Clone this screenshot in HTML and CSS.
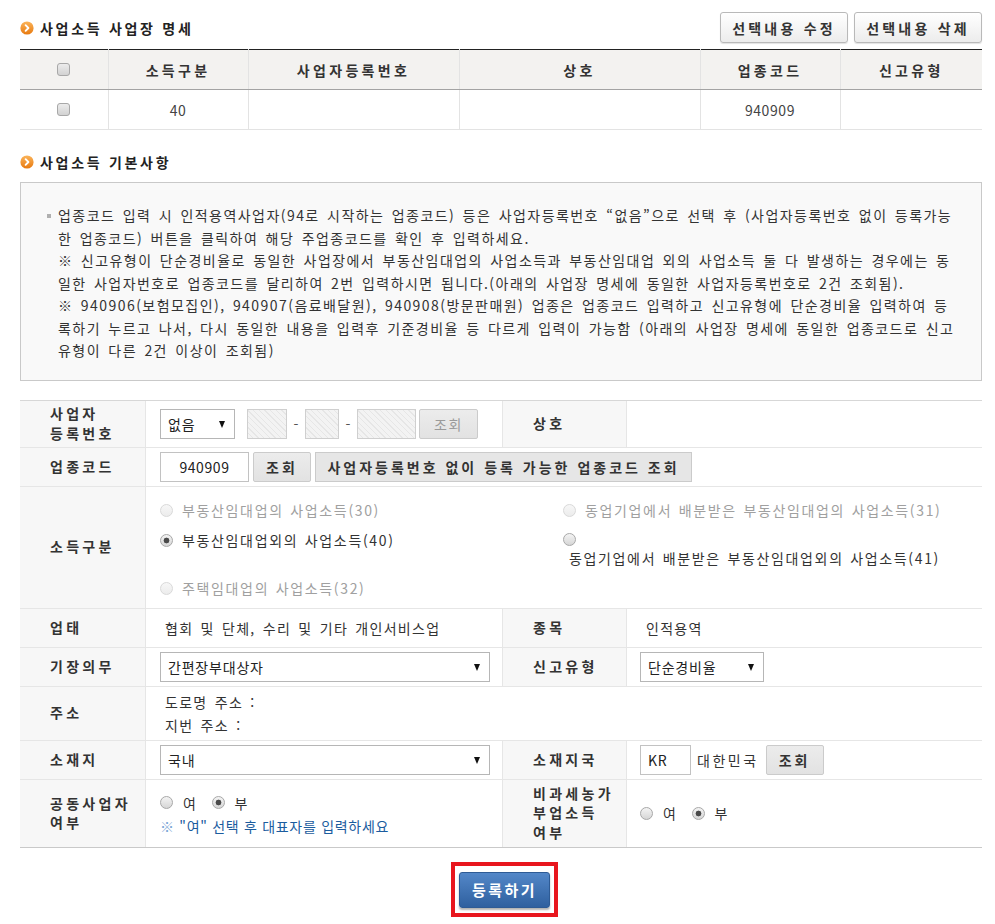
FILE: index.html
```html
<!DOCTYPE html>
<html lang="ko">
<head>
<meta charset="utf-8">
<title>사업소득 사업장 명세</title>
<link rel="stylesheet" href="styles.css">
</head>
<body>
<div class="page">
  <div class="sec-head">
    <h2 class="sec-title">
      <svg class="ico" width="14" height="14" viewBox="0 0 14 14"><defs><linearGradient id="og" x1="0" y1="0" x2="0" y2="1"><stop offset="0" stop-color="#fbb45a"/><stop offset="1" stop-color="#e7790f"/></linearGradient></defs><circle cx="7" cy="7" r="6.6" fill="url(#og)"/><path d="M5.6 4.2 L8.4 7 L5.6 9.8" fill="none" stroke="#fff" stroke-width="1.9" stroke-linecap="round" stroke-linejoin="round"/></svg>
      사업소득 사업장 명세
    </h2>
    <div class="head-btns">
      <button class="btn-w" type="button">선택내용 수정</button>
      <button class="btn-w" type="button">선택내용 삭제</button>
    </div>
  </div>

  <table class="list">
    <colgroup>
      <col class="c1"><col class="c2"><col class="c3"><col class="c4"><col class="c5"><col class="c6">
    </colgroup>
    <thead>
      <tr>
        <th><input type="checkbox" class="chk"></th>
        <th>소득구분</th>
        <th>사업자등록번호</th>
        <th>상호</th>
        <th>업종코드</th>
        <th>신고유형</th>
      </tr>
    </thead>
    <tbody>
      <tr>
        <td><input type="checkbox" class="chk"></td>
        <td>40</td>
        <td></td>
        <td></td>
        <td>940909</td>
        <td></td>
      </tr>
    </tbody>
  </table>

  <h2 class="sec-title sec-title2">
    <svg class="ico" width="14" height="14" viewBox="0 0 14 14"><defs><linearGradient id="og2" x1="0" y1="0" x2="0" y2="1"><stop offset="0" stop-color="#fbb45a"/><stop offset="1" stop-color="#e7790f"/></linearGradient></defs><circle cx="7" cy="7" r="6.6" fill="url(#og2)"/><path d="M5.6 4.2 L8.4 7 L5.6 9.8" fill="none" stroke="#fff" stroke-width="1.9" stroke-linecap="round" stroke-linejoin="round"/></svg>
    사업소득 기본사항
  </h2>

  <div class="info">
    <p class="info-txt">
      <span class="ln first">업종코드 입력 시 인적용역사업자(94로 시작하는 업종코드) 등은 사업자등록번호 “없음”으로 선택 후 (사업자등록번호 없이 등록가능</span>
      <span class="ln">한 업종코드) 버튼을 클릭하여 해당 주업종코드를 확인 후 입력하세요.</span>
      <span class="ln">※ 신고유형이 단순경비율로 동일한 사업장에서 부동산임대업의 사업소득과 부동산임대업 외의 사업소득 둘 다 발생하는 경우에는 동</span>
      <span class="ln">일한 사업자번호로 업종코드를 달리하여 2번 입력하시면 됩니다.(아래의 사업장 명세에 동일한 사업자등록번호로 2건 조회됨).</span>
      <span class="ln">※ 940906(보험모집인), 940907(음료배달원), 940908(방문판매원) 업종은 업종코드 입력하고 신고유형에 단순경비율 입력하여 등</span>
      <span class="ln">록하기 누르고 나서, 다시 동일한 내용을 입력후 기준경비율 등 다르게 입력이 가능함 (아래의 사업장 명세에 동일한 업종코드로 신고</span>
      <span class="ln">유형이 다른 2건 이상이 조회됨)</span>
    </p>
  </div>

  <div class="form">
    <!-- row 1 -->
    <div class="cell lbl">사업자<br>등록번호</div>
    <div class="cell val">
      <span class="sel w75"><select><option>없음</option></select></span>
      <input class="inp hatch w40" type="text" disabled>
      <span class="dash">-</span>
      <input class="inp hatch w34" type="text" disabled>
      <span class="dash">-</span>
      <input class="inp hatch w59" type="text" disabled>
      <button class="btn-g w59 off" type="button" disabled>조회</button>
    </div>
    <div class="cell lbl lbl2">상호</div>
    <div class="cell val val2"></div>

    <!-- row 2 -->
    <div class="cell lbl">업종코드</div>
    <div class="cell val span3">
      <input class="inp w89 center" type="text" value="940909">
      <button class="btn-g w58" type="button">조회</button>
      <button class="btn-g btn-long" type="button">사업자등록번호 없이 등록 가능한 업종코드 조회</button>
    </div>

    <!-- row 3 -->
    <div class="cell lbl">소득구분</div>
    <div class="cell val span3">
      <div class="rgrid">
        <label class="ritem dis"><input type="radio" class="rd" name="inc" disabled><span>부동산임대업의 사업소득(30)</span></label>
        <label class="ritem dis"><input type="radio" class="rd" name="inc" disabled><span>동업기업에서 배분받은 부동산임대업의 사업소득(31)</span></label>
        <label class="ritem"><input type="radio" class="rd" name="inc" checked><span>부동산임대업외의 사업소득(40)</span></label>
        <label class="ritem stack"><input type="radio" class="rd" name="inc"><span>동업기업에서 배분받은 부동산임대업외의 사업소득(41)</span></label>
        <label class="ritem dis"><input type="radio" class="rd" name="inc" disabled><span>주택임대업의 사업소득(32)</span></label>
      </div>
    </div>

    <!-- row 4 -->
    <div class="cell lbl">업태</div>
    <div class="cell val"><span class="txt">협회 및 단체, 수리 및 기타 개인서비스업</span></div>
    <div class="cell lbl lbl2">종목</div>
    <div class="cell val val2"><span class="txt">인적용역</span></div>

    <!-- row 5 -->
    <div class="cell lbl">기장의무</div>
    <div class="cell val"><span class="sel w330"><select><option>간편장부대상자</option></select></span></div>
    <div class="cell lbl lbl2">신고유형</div>
    <div class="cell val val2"><span class="sel w124"><select><option>단순경비율</option></select></span></div>

    <!-- row 6 -->
    <div class="cell lbl">주소</div>
    <div class="cell val span3">
      <div class="addr">
        <span class="txt">도로명 주소 :</span>
        <span class="txt">지번 주소 :</span>
      </div>
    </div>

    <!-- row 7 -->
    <div class="cell lbl">소재지</div>
    <div class="cell val"><span class="sel w330"><select><option>국내</option></select></span></div>
    <div class="cell lbl lbl2">소재지국</div>
    <div class="cell val val2">
      <input class="inp w51 kr" type="text" value="KR">
      <span class="country">대한민국</span>
      <button class="btn-g w58" type="button">조회</button>
    </div>

    <!-- row 8 -->
    <div class="cell lbl last">공동사업자<br>여부</div>
    <div class="cell val last">
      <div class="joint">
        <div class="rrow">
          <label class="ritem"><input type="radio" class="rd" name="joint"><span>여</span></label>
          <label class="ritem"><input type="radio" class="rd" name="joint" checked><span>부</span></label>
        </div>
        <p class="note"><span class="mark">※</span> "여" 선택 후 대표자를 입력하세요</p>
      </div>
    </div>
    <div class="cell lbl lbl2 last">비과세농가<br>부업소득<br>여부</div>
    <div class="cell val val2 last">
      <div class="rrow">
        <label class="ritem"><input type="radio" class="rd" name="farm"><span>여</span></label>
        <label class="ritem"><input type="radio" class="rd" name="farm" checked><span>부</span></label>
      </div>
    </div>
  </div>

  <div class="submit-wrap">
    <div class="hl">
      <button class="btn-submit" type="button">등록하기</button>
    </div>
  </div>
</div>
</body>
</html>
```

FILE: styles.css
```css
* { box-sizing: border-box; }

body {
  margin: 0;
  background: #fff;
  color: #333;
  font-family: "Noto Sans CJK KR", "Noto Sans", sans-serif;
  font-size: 14px;
  line-height: 18px;
}

.page {
  width: 995px;
  padding: 12px 13px 6px 20px;
}

/* section titles */
.sec-head {
  display: flex;
  justify-content: space-between;
  align-items: center;
  height: 31px;
}

.sec-title {
  margin: 0;
  display: flex;
  align-items: center;
  gap: 6px;
  font-size: 14px;
  font-weight: 700;
  letter-spacing: 2.7px;
  color: #222;
  line-height: 20px;
}

.sec-title2 {
  margin: 22px 0 10px;
  height: 20px;
}

.ico { flex: none; }

.head-btns {
  display: flex;
  gap: 6px;
}

.btn-w {
  width: 128px;
  height: 31px;
  padding: 0;
  border: 1px solid #b9b9b9;
  border-radius: 3px;
  background: linear-gradient(#ffffff, #ececec);
  box-shadow: 0 1px 1px rgba(0, 0, 0, 0.12);
  font-family: inherit;
  font-size: 14px;
  font-weight: 700;
  letter-spacing: 3.2px;
  color: #333;
}

/* list table */
.list {
  width: 962px;
  margin-top: 6px;
  border-collapse: collapse;
  table-layout: fixed;
  border-top: 1px solid #222;
}

.c1 { width: 88px; }
.c2 { width: 140px; }
.c3 { width: 211px; }
.c4 { width: 241px; }
.c5 { width: 140px; }
.c6 { width: 142px; }

.list th,
.list td {
  padding: 0;
  text-align: center;
  vertical-align: middle;
  border-left: 1px solid #e3e3e3;
}

.list th:first-child,
.list td:first-child { border-left: 0; }

.list th {
  height: 40px;
  background: #f3f2f0;
  border-bottom: 1px solid #a3a3a3;
  font-weight: 700;
  letter-spacing: 3.3px;
  color: #333;
}

.list td {
  height: 40px;
  border-bottom: 1px solid #e3e3e3;
  letter-spacing: 0.6px;
  color: #444;
}

.chk {
  appearance: none;
  -webkit-appearance: none;
  display: block;
  margin: 0 auto;
  width: 13px;
  height: 13px;
  border: 1px solid #a8a8a8;
  border-radius: 3px;
  background: linear-gradient(#ececec, #d2d2d2);
}

/* info box */
.info {
  border: 1px solid #c9c9c9;
  background: #f9f9f9;
  padding: 21px 10px 18px 26px;
}

.info-txt {
  margin: 0;
  font-size: 14px;
  line-height: 22.5px;
  letter-spacing: 1.45px;
  word-spacing: 2px;
  color: #333;
}

.ln {
  display: block;
  white-space: nowrap;
  padding-left: 11px;
}

.ln.first { position: relative; }

.ln.first::before {
  content: "";
  position: absolute;
  left: 0;
  top: 10px;
  width: 4px;
  height: 4px;
  background: #b0b0b0;
}

/* form */
.form {
  margin-top: 19px;
  display: grid;
  grid-template-columns: 126px 356px 125px 355px;
  grid-template-rows: 47px 39px 122px 39px 39px 54px 39px 67px;
  border-top: 1px solid #d7d7d7;
  border-bottom: 1px solid #c9c9c9;
}

.cell {
  display: flex;
  align-items: center;
  border-bottom: 1px solid #e6e6e6;
}

.cell.last { border-bottom: 0; }

.lbl {
  background: #f7f7f7;
  border-right: 1px solid #e6e6e6;
  padding-left: 30px;
  font-weight: 700;
  letter-spacing: 3.3px;
  line-height: 19.5px;
  color: #333;
}

.lbl2 {
  border-left: 1px solid #e6e6e6;
  padding-left: 30px;
}

.val { padding-left: 14px; }
.val2 { padding-left: 13px; }

.span3 { grid-column: span 3; }

.txt {
  padding-left: 5px;
  letter-spacing: 1.3px;
  word-spacing: 2px;
  color: #333;
}

.val2 .txt { padding-left: 6px; }

/* controls */
.sel {
  position: relative;
  display: inline-block;
  height: 30px;
}

.sel select {
  appearance: none;
  -webkit-appearance: none;
  width: 100%;
  height: 30px;
  margin: 0;
  padding: 0 0 0 7px;
  border: 1px solid #b6b6b6;
  border-radius: 0;
  background: #fff;
  font-family: inherit;
  font-size: 14px;
  letter-spacing: 0.8px;
  color: #222;
}

.sel::after {
  content: "";
  position: absolute;
  right: 10px;
  top: 12px;
  border-left: 3.5px solid transparent;
  border-right: 3.5px solid transparent;
  border-top: 7px solid #111;
  pointer-events: none;
}

.w75 { width: 75px; }
.w330 { width: 330px; }
.w124 { width: 124px; }

.inp {
  height: 30px;
  margin: 0;
  padding: 0 6px;
  border: 1px solid #c2c2c2;
  background: #fff;
  font-family: inherit;
  font-size: 14px;
  letter-spacing: 0.6px;
  color: #222;
}

.inp.center { text-align: center; }
.inp.kr { padding-left: 7px; }

.hatch {
  border-color: #cfcfcf;
  background: repeating-linear-gradient(45deg, #f3f3f3 0 3px, #e6e6e6 3px 4px);
}

.w40 { width: 40px; margin-left: 12px; }
.w34 { width: 34px; }
.w59 { width: 59px; }
.w89 { width: 89px; }
.w51 { width: 51px; }
.w58 { width: 58px; }

.dash {
  width: 18px;
  text-align: center;
  color: #555;
}

.btn-g {
  height: 30px;
  margin: 0 0 0 4px;
  padding: 0;
  border: 1px solid #cbcbcb;
  border-radius: 2px;
  background: linear-gradient(#ececec, #e2e2e2);
  font-family: inherit;
  font-size: 14px;
  font-weight: 700;
  letter-spacing: 3px;
  color: #333;
}

.btn-g.w59 { margin-left: 3px; }

.btn-g.off {
  color: #9a9a9a;
  font-weight: 400;
  letter-spacing: 1.5px;
}

.btn-long {
  width: 377px;
  border-radius: 0;
  background: #e6e6e6;
}

.country {
  margin-left: 6px;
  letter-spacing: 2.5px;
  color: #333;
}

.val2 .btn-g { margin-left: 7px; }

/* radios */
.rgrid {
  display: grid;
  grid-template-columns: 403px 1fr;
  row-gap: 12px;
  align-items: start;
  padding-top: 4px;
}

.ritem {
  display: flex;
  align-items: center;
  gap: 9px;
  line-height: 18px;
  letter-spacing: 1.65px;
  word-spacing: 1px;
  color: #333;
}

.ritem.dis { color: #a0a0a0; }

.ritem.stack {
  flex-direction: column;
  align-items: flex-start;
  gap: 0;
}

.ritem.stack .rd { margin: 2px 0 3px; }
.ritem.stack span { padding-left: 6px; }

.rd {
  appearance: none;
  -webkit-appearance: none;
  flex: none;
  width: 13px;
  height: 13px;
  margin: 0;
  border: 1px solid #a8a8a8;
  border-radius: 50%;
  background: linear-gradient(#f4f4f4, #d6d6d6);
}

.rd:checked {
  background:
    radial-gradient(circle, #4a4a4a 0 2.6px, transparent 3.2px),
    linear-gradient(#f4f4f4, #d6d6d6);
}

.rd:disabled {
  border-color: #d9d9d9;
  background: linear-gradient(#f7f7f7, #ececec);
}

.rrow {
  display: flex;
  gap: 14px;
}

.rrow .ritem { gap: 10px; }

.joint {
  display: flex;
  flex-direction: column;
  gap: 5px;
  margin-top: 2px;
}

.note {
  margin: 0;
  line-height: 18px;
  letter-spacing: 0.7px;
  color: #1b5c9e;
}

.mark { color: #7aa6d6; }

.addr {
  display: flex;
  flex-direction: column;
  line-height: 23px;
  margin-top: 2px;
}

/* submit */
.submit-wrap {
  display: flex;
  justify-content: center;
  margin-top: 14px;
  padding-left: 7px;
}

.hl {
  border: 4px solid #e8161e;
  padding: 6px 4px 5px 4px;
}

.btn-submit {
  display: block;
  width: 91px;
  height: 36px;
  padding: 0;
  border: 1px solid #2e5b95;
  border-radius: 3px;
  background: linear-gradient(#5387c8, #2f609f);
  box-shadow: 0 2px 2px rgba(0, 0, 0, 0.3);
  font-family: inherit;
  font-size: 15px;
  font-weight: 700;
  letter-spacing: 2.5px;
  color: #fff;
}
```
